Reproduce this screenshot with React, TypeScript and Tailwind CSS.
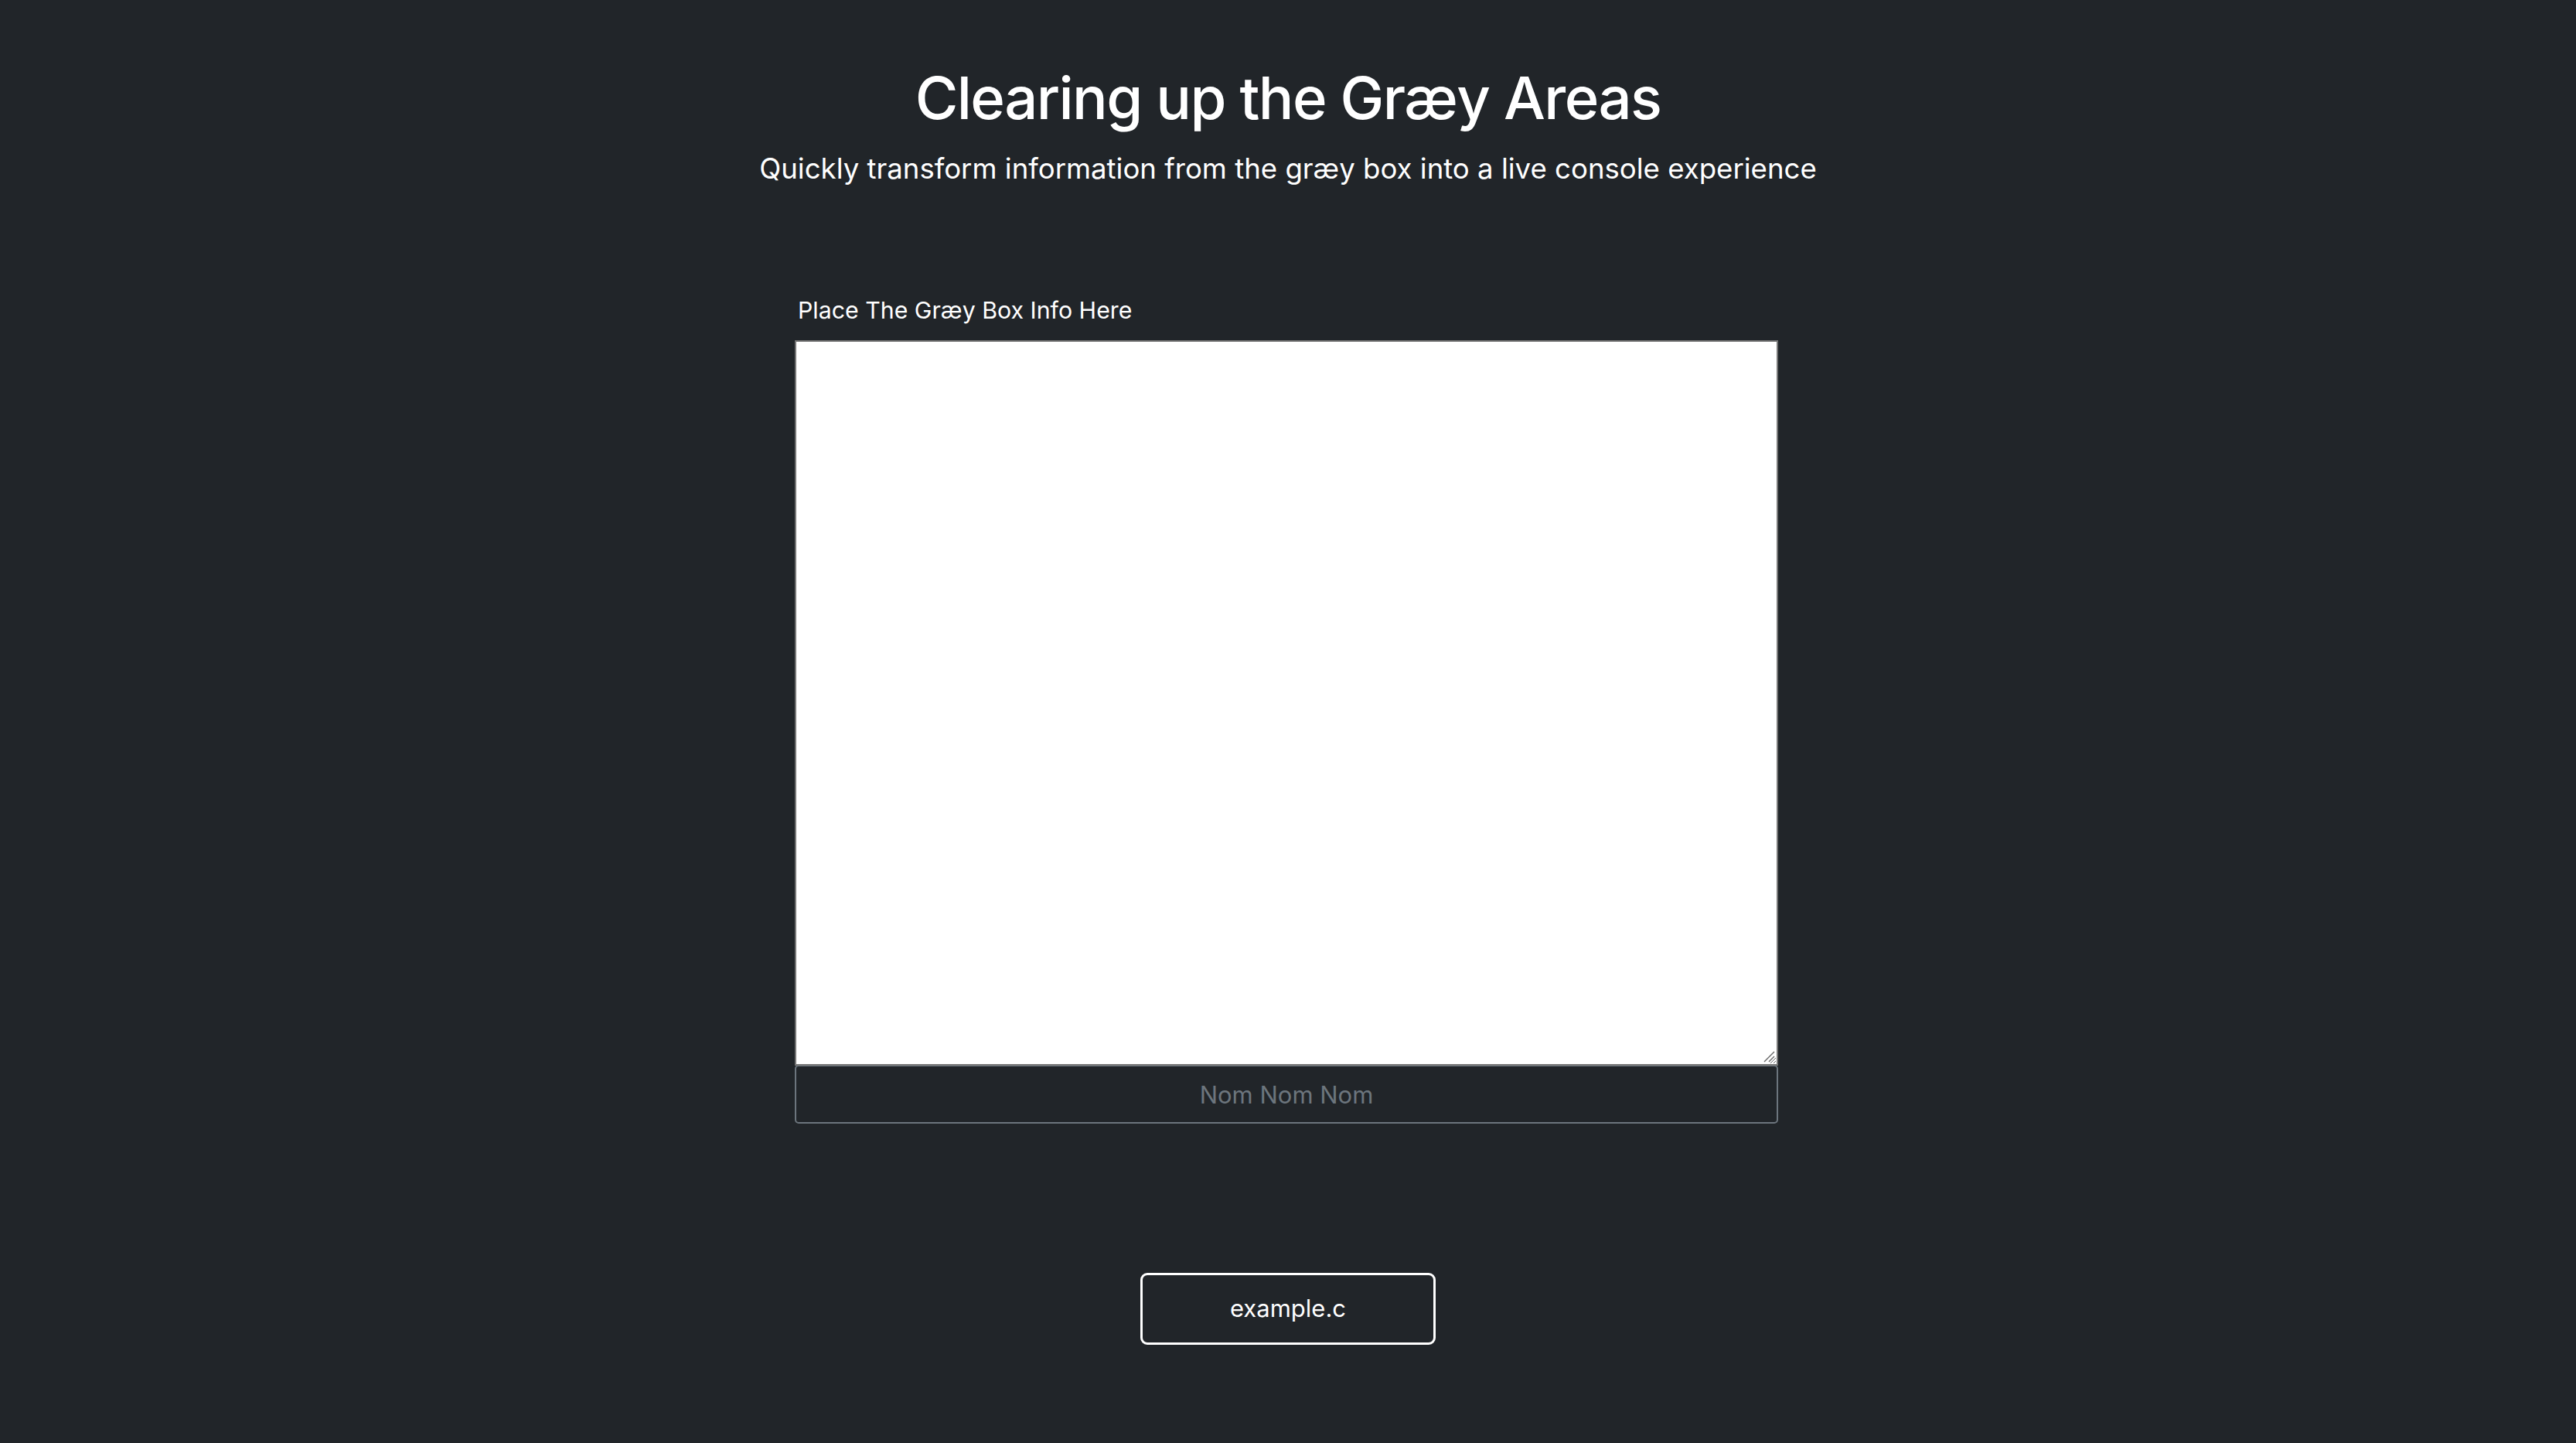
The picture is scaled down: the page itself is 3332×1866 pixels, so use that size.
import React from "react";

export default function App() {
  return (
    <div
      className="min-h-[1866px] w-full bg-[#212529] text-white flex flex-col items-center"
      style={{ fontFamily: "Inter, 'Noto Sans', sans-serif" }}
    >
      <h1 className="mt-[78px] text-[76px] leading-[96px] font-medium tracking-[-1.6px]">
        Clearing up the Græy Areas
      </h1>
      <p className="mt-[23px] text-[36.6px] leading-[42px]">
        Quickly transform information from the græy box into a live console experience
      </p>
      <div className="mt-[144px] mr-[4px] w-[1272px] flex flex-col">
        <label className="ml-[4px] text-[30.3px] leading-[36px]">Place The Græy Box Info Here</label>
        <div className="relative mt-[21px] h-[938px] w-full">
          <textarea className="block h-full w-full bg-white border-2 border-[#767676] text-black resize-y outline-none" />
          <svg
            className="absolute right-[4px] bottom-[4px] pointer-events-none"
            width="16"
            height="16"
            viewBox="0 0 16 16"
          >
            <line x1="2" y1="15" x2="15" y2="2" stroke="#6b6b6b" strokeWidth="1.5" />
            <line x1="8" y1="15" x2="15" y2="8" stroke="#6b6b6b" strokeWidth="1.5" />
          </svg>
        </div>
        <input
          placeholder="Nom Nom Nom"
          className="mt-[-1px] h-[76px] w-full bg-[#212529] border-2 border-[#6c757d] rounded-[5px] text-center text-[31px] text-white placeholder:text-[#6c757d] outline-none"
        />
      </div>
      <button className="mt-[193px] w-[382px] h-[93px] border-[3px] border-white rounded-[9px] text-[31px] text-white bg-transparent">
        example.c
      </button>
    </div>
  );
}
